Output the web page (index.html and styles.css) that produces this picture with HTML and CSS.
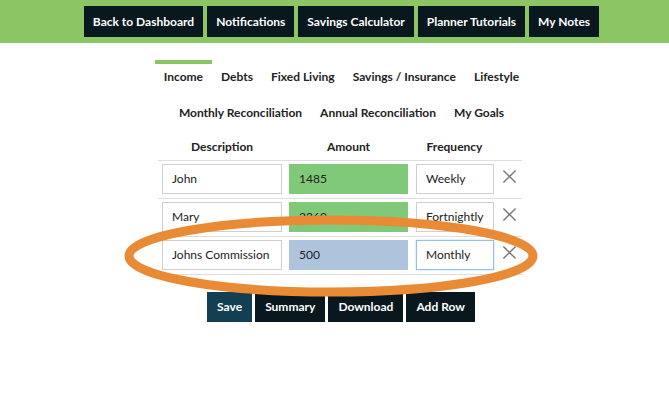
FILE: index.html
```html
<!DOCTYPE html>
<html>
<head>
<meta charset="utf-8">
<link rel="stylesheet" href="styles.css">
</head>
<body>
<header class="topbar">
  <nav class="topnav">
    <a class="topbtn">Back to Dashboard</a>
    <a class="topbtn">Notifications</a>
    <a class="topbtn">Savings Calculator</a>
    <a class="topbtn">Planner Tutorials</a>
    <a class="topbtn">My Notes</a>
  </nav>
</header>
<main class="main">
  <div class="tabs">
    <span class="tab active">Income</span>
    <span class="tab">Debts</span>
    <span class="tab">Fixed Living</span>
    <span class="tab">Savings / Insurance</span>
    <span class="tab">Lifestyle</span>
  </div>
  <div class="tabs">
    <span class="tab">Monthly Reconciliation</span>
    <span class="tab">Annual Reconciliation</span>
    <span class="tab">My Goals</span>
  </div>
  <div class="table">
    <div class="row head">
      <span class="th">Description</span>
      <span class="th">Amount</span>
      <span class="th">Frequency</span>
      <span></span>
    </div>
    <div class="row">
      <div class="field">John</div>
      <div class="field amt">1485</div>
      <div class="field">Weekly</div>
      <svg class="del" viewBox="0 0 16 16"><path d="M1.5 1.5L14.5 14.5M14.5 1.5L1.5 14.5"/></svg>
    </div>
    <div class="row">
      <div class="field">Mary</div>
      <div class="field amt">2360</div>
      <div class="field">Fortnightly</div>
      <svg class="del" viewBox="0 0 16 16"><path d="M1.5 1.5L14.5 14.5M14.5 1.5L1.5 14.5"/></svg>
    </div>
    <div class="row last">
      <div class="field">Johns Commission</div>
      <div class="field amt new">500</div>
      <div class="field focus">Monthly</div>
      <svg class="del" viewBox="0 0 16 16"><path d="M1.5 1.5L14.5 14.5M14.5 1.5L1.5 14.5"/></svg>
    </div>
    <svg class="circle" viewBox="0 0 420 90" width="420" height="90"><ellipse cx="210" cy="45" rx="202" ry="36"/></svg>
  </div>
  <div class="actions">
    <a class="btn save">Save</a>
    <a class="btn">Summary</a>
    <a class="btn">Download</a>
    <a class="btn">Add Row</a>
  </div>
</main>
</body>
</html>
```
FILE: styles.css
```css
* { box-sizing: border-box; }
body {
  margin: 0;
  background: #fff;
  font-family: Lato, "Open Sans", sans-serif;
  color: #222;
}
.topbar {
  background: #8cc563;
  height: 43px;
  padding: 6px 0 0 14px;
}
.topnav {
  display: flex;
  justify-content: center;
  gap: 4px;
}
.topbtn {
  background: #08181e;
  color: #fff;
  font-size: 12px;
  font-weight: 700;
  height: 31px;
  line-height: 31px;
  padding: 0 9px;
  display: block;
}
.main {
  padding: 17px 0 0 14px;
  display: flex;
  flex-direction: column;
  align-items: center;
}
.tabs {
  display: flex;
  justify-content: center;
}
.tab {
  font-size: 12px;
  font-weight: 700;
  color: #222;
  line-height: 16px;
  padding: 5px 9px 11px;
  border-top: 4px solid transparent;
}
.tab.active { border-top-color: #8cc563; }
.table {
  position: relative;
  width: 364px;
  margin-left: -3px;
}
.row {
  display: grid;
  grid-template-columns: 120px 119px 79px 16px;
  column-gap: 7px;
  padding: 3px 0 4px 4px;
  border-top: 1px solid #dedede;
  align-items: start;
}
.row.last { border-bottom: 1px solid #dedede; }
.row.head {
  border-top: none;
  padding: 7px 0 5px 4px;
}
.th {
  text-align: center;
  font-size: 12px;
  font-weight: 700;
  line-height: 16px;
}
.field {
  height: 30px;
  line-height: 28px;
  border: 1px solid #cfcfcf;
  padding: 0 9px;
  font-size: 12px;
  color: #222;
  background: #fff;
  white-space: nowrap;
}
.row > .field:nth-child(3) { margin-left: 1px; }
.field.amt {
  background: #80c978;
  border-color: #80c978;
}
.field.amt.new {
  background: #adc4dc;
  border-color: #adc4dc;
}
.field.focus {
  border-color: #93bdec;
  box-shadow: 0 0 2px #bcd6f3;
}
.del {
  width: 15px;
  height: 15px;
  margin-top: 5px;
  margin-left: 1px;
}
.del path {
  stroke: #777;
  stroke-width: 1.5;
  fill: none;
}
.circle {
  position: absolute;
  left: -37px;
  top: 79px;
  overflow: visible;
  pointer-events: none;
}
.circle ellipse {
  fill: none;
  stroke: #e98a35;
  stroke-width: 9;
}
.actions {
  display: flex;
  gap: 3px;
  margin-top: 17px;
  margin-left: -1px;
}
.btn {
  background: #08181e;
  color: #fff;
  font-size: 12px;
  font-weight: 700;
  height: 30px;
  line-height: 30px;
  padding: 0 10px;
  display: block;
}
.btn.save { background: #123f51; }
```
